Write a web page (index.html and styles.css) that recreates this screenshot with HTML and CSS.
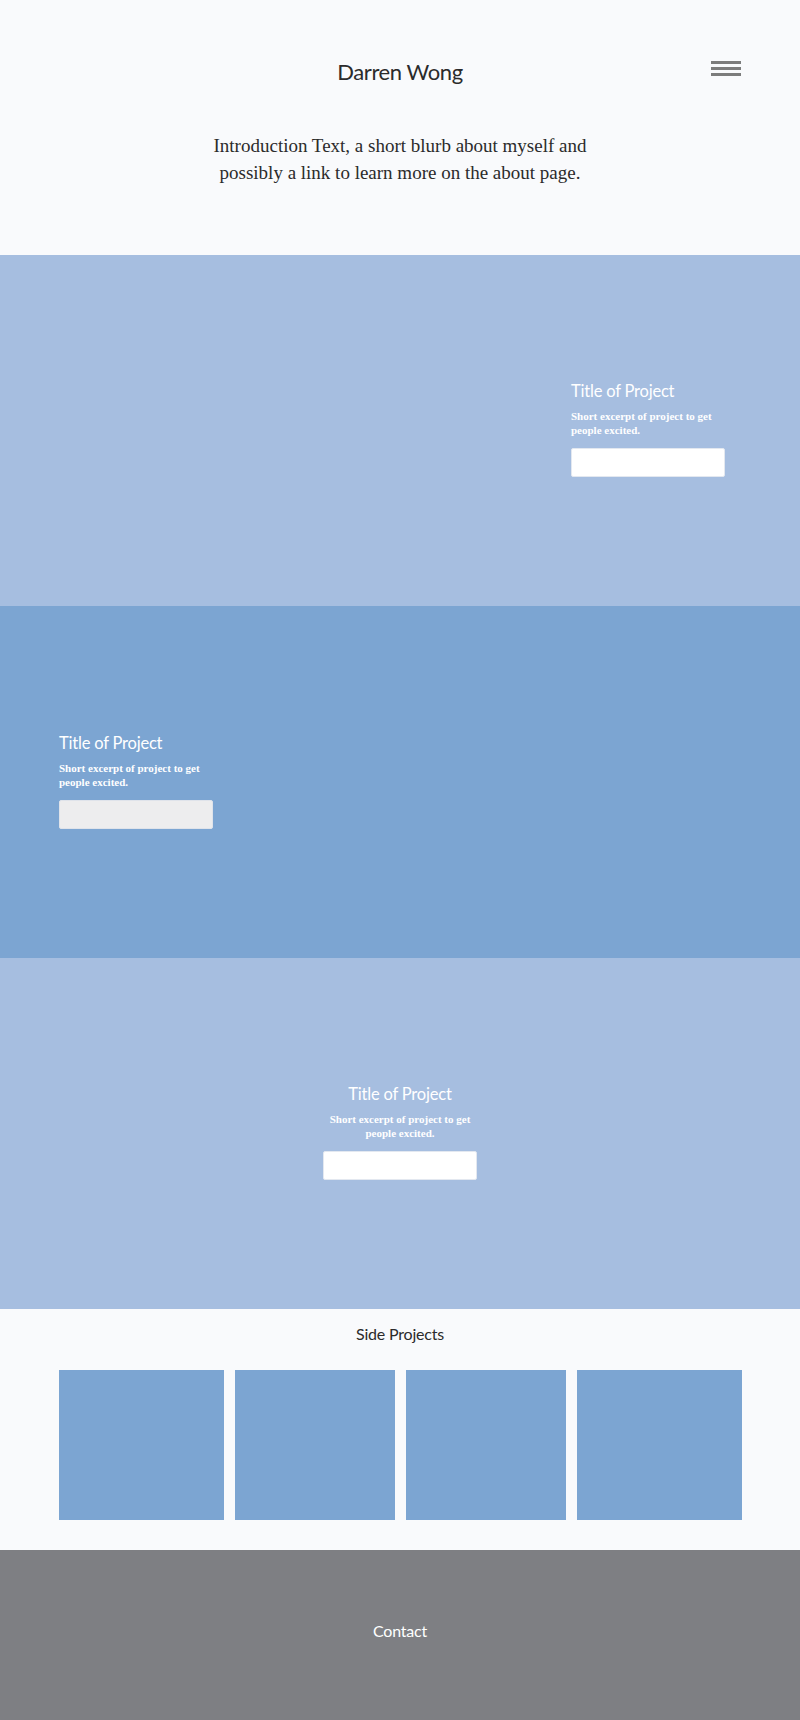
FILE: index.html
```html
<!DOCTYPE html>
<html lang="en">
<head>
<meta charset="utf-8">
<title>Darren Wong</title>
<link rel="stylesheet" href="styles.css">
</head>
<body>
<header class="site-header">
  <div class="header-bar">
    <span class="spacer"></span>
    <h1 class="site-title">Darren Wong</h1>
    <button class="menu-btn" aria-label="Menu">
      <span class="bar"></span><span class="bar"></span><span class="bar"></span>
    </button>
  </div>
  <p class="intro">Introduction Text, a short blurb about myself and possibly a link to learn more on the about page.</p>
</header>

<main>
  <section class="project project-light align-right">
    <div class="project-inner">
      <div class="project-card">
        <h2 class="project-title">Title of Project</h2>
        <p class="project-excerpt">Short excerpt of project to get people excited.</p>
        <a class="project-btn" href="#"></a>
      </div>
    </div>
  </section>

  <section class="project project-dark align-left">
    <div class="project-inner">
      <div class="project-card">
        <h2 class="project-title">Title of Project</h2>
        <p class="project-excerpt">Short excerpt of project to get people excited.</p>
        <a class="project-btn btn-grey" href="#"></a>
      </div>
    </div>
  </section>

  <section class="project project-light align-center">
    <div class="project-inner">
      <div class="project-card">
        <h2 class="project-title">Title of Project</h2>
        <p class="project-excerpt">Short excerpt of project to get people excited.</p>
        <a class="project-btn" href="#"></a>
      </div>
    </div>
  </section>

  <section class="side-projects">
    <h2 class="side-title">Side Projects</h2>
    <div class="side-grid">
      <div class="side-card"></div>
      <div class="side-card"></div>
      <div class="side-card"></div>
      <div class="side-card"></div>
    </div>
  </section>
</main>

<footer class="site-footer">
  <h2 class="contact-title">Contact</h2>
</footer>
</body>
</html>
```

FILE: styles.css
```css
* { box-sizing: border-box; }

html, body {
  margin: 0;
  padding: 0;
}

body {
  background: #f9fafc;
  font-family: Lato, "Open Sans", sans-serif;
  color: #2b2b2b;
}

.site-header {
  height: 255px;
  padding-top: 57px;
}

.header-bar {
  width: 682px;
  margin: 0 auto;
  display: grid;
  grid-template-columns: 1fr auto 1fr;
  align-items: start;
}

.site-title {
  margin: 0;
  font-family: Lato, sans-serif;
  font-weight: 400;
  font-size: 22px;
  letter-spacing: -0.4px;
  line-height: 30px;
  color: #2b2b2b;
}

.menu-btn {
  justify-self: end;
  margin-top: 4px;
  width: 30px;
  padding: 0;
  border: 0;
  background: none;
  display: flex;
  flex-direction: column;
  gap: 3px;
  cursor: pointer;
}

.menu-btn .bar {
  display: block;
  width: 30px;
  height: 3px;
  background: #7c7c7c;
}

.intro {
  width: 410px;
  margin: 46px auto 0;
  text-align: center;
  font-family: "Liberation Serif", serif;
  font-size: 19px;
  line-height: 26.6px;
  color: #2b2b2b;
}

.project {
  display: flex;
  align-items: center;
}

.project:nth-child(1) { height: 351px; }
.project:nth-child(2) { height: 352px; }
.project:nth-child(3) { height: 351px; }

.project-light { background: #a6bee0; }
.project-dark { background: #7ca5d2; }

.project-inner {
  width: 682px;
  margin: 0 auto;
  display: flex;
}

.align-right .project-inner { justify-content: flex-end; }
.align-left .project-inner { justify-content: flex-start; }
.align-center .project-inner { justify-content: center; }

.project-card {
  width: 170px;
  padding-bottom: 4px;
  color: #fff;
}

.align-center .project-card { text-align: center; }

.project-title {
  margin: 0;
  font-family: Lato, sans-serif;
  font-weight: 400;
  font-size: 16.5px;
  letter-spacing: -0.2px;
  line-height: 22px;
  color: #fff;
}

.project-excerpt {
  margin: 7px 0 0;
  font-family: "Liberation Serif", serif;
  font-weight: 700;
  font-size: 11px;
  line-height: 14px;
  color: #fff;
}

.project-btn {
  display: block;
  width: 154px;
  height: 29px;
  margin-top: 11px;
  background: #fff;
  border: 1px solid #e3e8f0;
  border-radius: 2px;
}

.align-center .project-btn { margin-left: auto; margin-right: auto; }

.btn-grey { background: #ededee; border-color: #dfe3ea; }

.side-projects {
  height: 241px;
  padding-top: 14px;
}

.side-title {
  margin: 0;
  text-align: center;
  font-family: Lato, sans-serif;
  font-weight: 400;
  font-size: 16px;
  letter-spacing: -0.2px;
  line-height: 22px;
  color: #2b2b2b;
}

.side-grid {
  width: 683px;
  margin: 25px auto 0;
  display: grid;
  grid-template-columns: 165px 160px 160px 165px;
  column-gap: 11px;
}

.side-card {
  height: 150px;
  background: #7ca5d2;
}

.site-footer {
  height: 170px;
  background: #7e7f83;
  padding-top: 70px;
}

.contact-title {
  margin: 0;
  text-align: center;
  font-family: Lato, sans-serif;
  font-weight: 400;
  font-size: 16px;
  letter-spacing: -0.2px;
  line-height: 22px;
  color: #fff;
}
```
